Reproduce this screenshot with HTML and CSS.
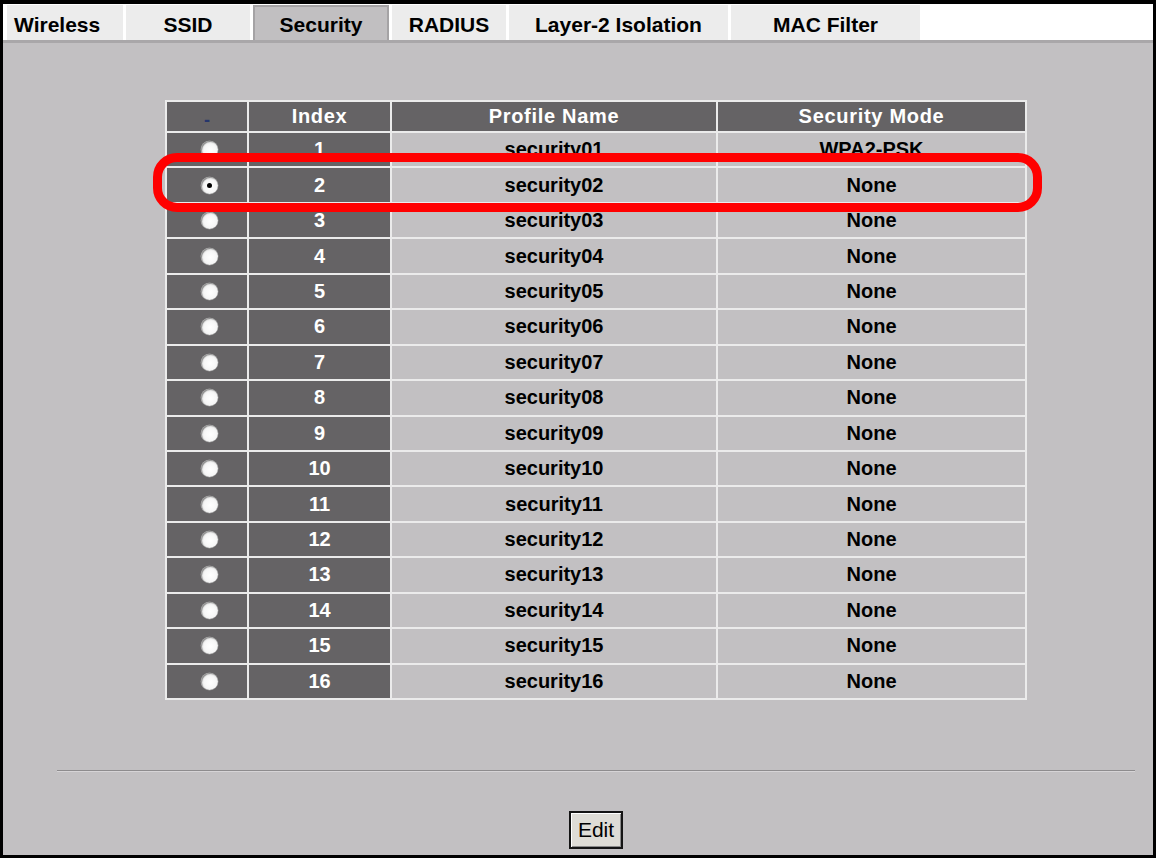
FILE: index.html
```html
<!DOCTYPE html>
<html>
<head>
<meta charset="utf-8">
<title>Wireless Security</title>
<link rel="stylesheet" href="styles.css">
</head>
<body>
<div class="frame">
  <div class="tabs">
    <div class="tab tab-wireless">Wireless</div>
    <div class="tab tab-ssid">SSID</div>
    <div class="tab tab-security active">Security</div>
    <div class="tab tab-radius">RADIUS</div>
    <div class="tab tab-layer2">Layer-2 Isolation</div>
    <div class="tab tab-mac">MAC Filter</div>
  </div>
  <div class="panel">
    <div class="inner">
      <div class="table-wrap">
        <table class="grid">
          <tr class="head">
            <th class="h-sel"><span class="dash">-</span></th>
            <th class="h-index">Index</th>
            <th class="h-name">Profile Name</th>
            <th class="h-mode">Security Mode</th>
          </tr>
          <tr><td class="dk"><span class="radio"></span></td><td class="dk">1</td><td>security01</td><td>WPA2-PSK</td></tr>
          <tr><td class="dk"><span class="radio"><span class="dot"></span></span></td><td class="dk">2</td><td>security02</td><td>None</td></tr>
          <tr><td class="dk"><span class="radio"></span></td><td class="dk">3</td><td>security03</td><td>None</td></tr>
          <tr><td class="dk"><span class="radio"></span></td><td class="dk">4</td><td>security04</td><td>None</td></tr>
          <tr><td class="dk"><span class="radio"></span></td><td class="dk">5</td><td>security05</td><td>None</td></tr>
          <tr><td class="dk"><span class="radio"></span></td><td class="dk">6</td><td>security06</td><td>None</td></tr>
          <tr><td class="dk"><span class="radio"></span></td><td class="dk">7</td><td>security07</td><td>None</td></tr>
          <tr><td class="dk"><span class="radio"></span></td><td class="dk">8</td><td>security08</td><td>None</td></tr>
          <tr><td class="dk"><span class="radio"></span></td><td class="dk">9</td><td>security09</td><td>None</td></tr>
          <tr><td class="dk"><span class="radio"></span></td><td class="dk">10</td><td>security10</td><td>None</td></tr>
          <tr><td class="dk"><span class="radio"></span></td><td class="dk">11</td><td>security11</td><td>None</td></tr>
          <tr><td class="dk"><span class="radio"></span></td><td class="dk">12</td><td>security12</td><td>None</td></tr>
          <tr><td class="dk"><span class="radio"></span></td><td class="dk">13</td><td>security13</td><td>None</td></tr>
          <tr><td class="dk"><span class="radio"></span></td><td class="dk">14</td><td>security14</td><td>None</td></tr>
          <tr><td class="dk"><span class="radio"></span></td><td class="dk">15</td><td>security15</td><td>None</td></tr>
          <tr><td class="dk"><span class="radio"></span></td><td class="dk">16</td><td>security16</td><td>None</td></tr>
        </table>
        <div class="highlight"></div>
      </div>
      <div class="rule"></div>
      <div class="actions"><button class="btn" type="button">Edit</button></div>
    </div>
  </div>
</div>
</body>
</html>
```
FILE: styles.css
```css
html, body {
  margin: 0;
  padding: 0;
  background: #ffffff;
}

body {
  font-family: "Liberation Sans", Arial, sans-serif;
  color: #000;
}

.frame {
  width: 1150px;
  height: 851px;
  border: 3px solid #000;
  border-top-width: 4px;
  display: flex;
  flex-direction: column;
  background: #ffffff;
}

/* ---------- tabs ---------- */
.tabs {
  display: flex;
  gap: 3px;
  height: 35px;
  padding: 1px 0 0 4px;
  border-bottom: 3px solid #a9a7a9;
  background: #ffffff;
  flex: none;
}

.tab {
  box-sizing: border-box;
  height: 35px;
  padding-top: 5px;
  line-height: 29px;
  background: #ececec;
  font-size: 21px;
  font-weight: bold;
  text-align: center;
  white-space: nowrap;
}

.tab-wireless { width: 116px; text-align: left; padding-left: 7px; }
.tab-ssid     { width: 124px; }
.tab-security { width: 136px; }
.tab-radius   { width: 114px; }
.tab-layer2   { width: 219px; }
.tab-mac      { width: 189px; }

.tab.active {
  background: #c1bfc1;
  border: 2px solid #a5a3a5;
  border-bottom: 0;
  padding-top: 3px;
}

/* ---------- panel ---------- */
.panel {
  flex: 1;
  background: #c2c0c2;
  padding-top: 57px;
}

.inner {
  width: 1078px;
  margin-left: 54px;
}

.table-wrap {
  position: relative;
  width: 862px;
  margin: 0 auto;
}

.grid {
  border-collapse: separate;
  border-spacing: 0;
  border: 1px solid #ebebeb;
}

.grid th,
.grid td {
  border: 1px solid #ebebeb;
  padding: 0;
  text-align: center;
  vertical-align: middle;
  font-size: 20px;
  font-weight: bold;
  white-space: nowrap;
}

.grid th {
  height: 26px;
  background: #656365;
  color: #ffffff;
  letter-spacing: 0.7px;
}

.h-sel   { width: 80px; }
.h-index { width: 141px; }
.h-name  { width: 324px; }
.h-mode  { width: 307px; }

.grid th.h-sel {
  height: 20px;
  padding-top: 6px;
}

.dash {
  color: #26366c;
  font-size: 18px;
  letter-spacing: 0;
}

.grid td {
  height: 33.44px;
  color: #000;
}

.grid td.dk {
  background: #656365;
  color: #ffffff;
}

.radio {
  display: flex;
  align-items: center;
  justify-content: center;
  width: 17px;
  height: 17px;
  margin-left: 34px;
  border-radius: 50%;
  background: radial-gradient(circle at 55% 55%, #ffffff 0, #f7f7f7 45%, #dedede 85%);
  box-shadow: inset 1px 1px 1px #8c8c8c, 0 0 0 0.5px #9a9a9a;
}

.dot {
  width: 5px;
  height: 5px;
  border-radius: 50%;
  background: #000;
}

.highlight {
  position: absolute;
  left: -12px;
  top: 53px;
  width: 889px;
  height: 59px;
  box-sizing: border-box;
  border: 9px solid #ff0000;
  border-radius: 24px;
}

.rule {
  margin-top: 70px;
  height: 0;
  border-top: 1px solid #8e8c8e;
  border-bottom: 1px solid #d6d4d6;
}

.actions {
  display: flex;
  justify-content: center;
  margin-top: 39px;
}

.btn {
  box-sizing: border-box;
  height: 38px;
  padding: 0 7px;
  border: 2px solid #141414;
  background: #dedcd6;
  box-shadow: inset 1px 1px 0 #ffffff, inset -1px -1px 0 #8a8a8a;
  font-family: "Liberation Sans", Arial, sans-serif;
  font-size: 21px;
  line-height: 34px;
  color: #000;
  border-radius: 0;
}
```
